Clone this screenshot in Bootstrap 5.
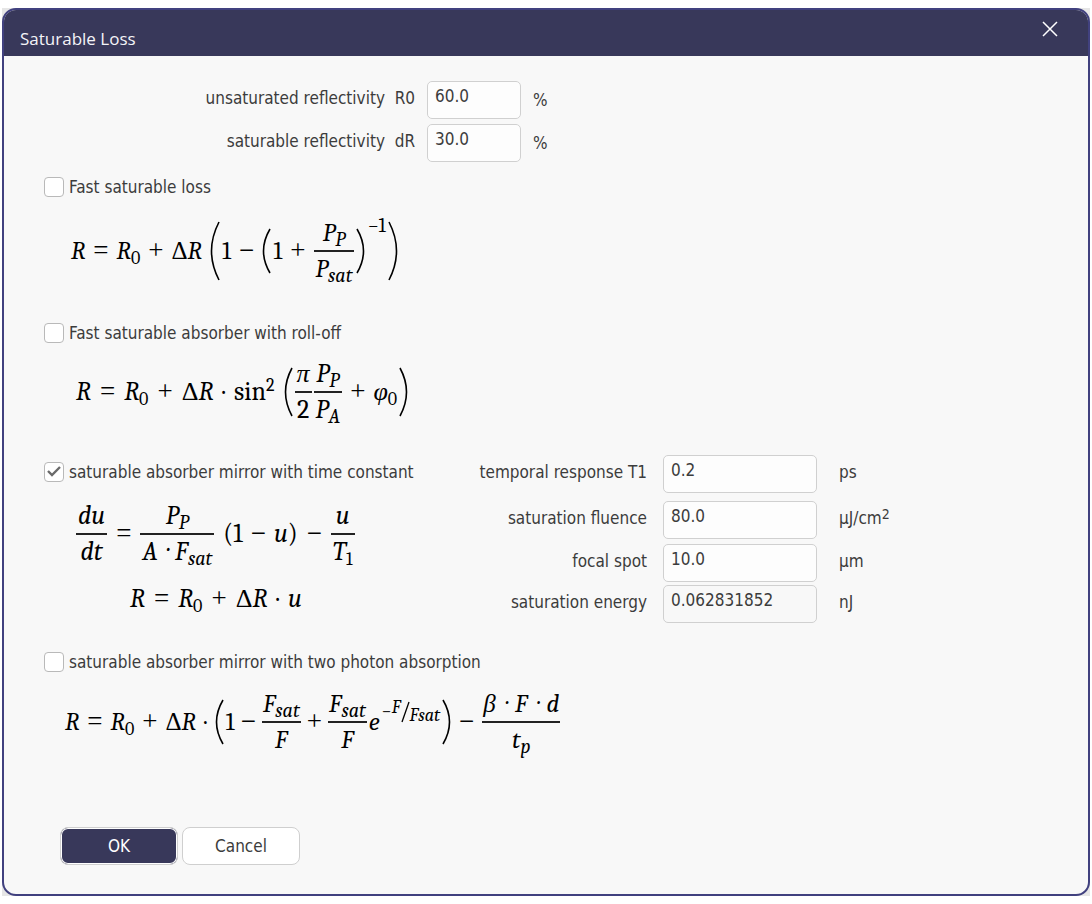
<!DOCTYPE html>
<html lang="en">
<head>
<meta charset="utf-8">
<meta name="viewport" content="width=device-width, initial-scale=1">
<title>Saturable Loss</title>
<link href="https://cdn.jsdelivr.net/npm/bootstrap@5.3.0/dist/css/bootstrap.min.css" rel="stylesheet">
<style>
  :root { --navy: #38385a; --edge: #41417f; --ink: #3c3c3c; }
  body { background: #fff; color: var(--ink); font: 17px/24px "DejaVu Sans Condensed", "DejaVu Sans", sans-serif; }

  /* window frame */
  .backdrop-area { background: #e6e6e6; margin: 8px 2px; }
  .dialog { background: #f8f8f8; border: 2px solid var(--edge); border-radius: 14px; overflow: hidden; }
  .titlebar { background: var(--navy); color: #f4f4f8; height: 46px; padding: 0 28px 0 16px; }
  .titlebar h1 { font: 17px/24px "Open Sans", "Noto Sans", sans-serif; margin: 17px 0 0; }
  .close-x { background: none; border: 0; padding: 0; margin-top: 9px; width: 20px; height: 20px; }
  .dialog-body { padding: 25px 40px 29px; }

  /* fields */
  .top-fields { display: grid; grid-template-columns: 371px 94px auto; column-gap: 12px; row-gap: 5px; align-items: center; justify-content: start; }
  .side-fields { display: grid; grid-template-columns: 190px 154px auto; grid-template-rows: 46px 43px 41px 38px; column-gap: 16px; align-items: start; }
  .top-fields label, .side-fields label { text-align: right; white-space: pre; padding-bottom: 4px; }
  .side-fields label, .side-fields .unit { padding-top: 5px; }
  .side-fields .unit { padding-left: 6px; }
  .unit sup { font-size: 14px; top: -5px; line-height: 0; }
  .form-control { height: 38px; padding: 0 7px 8px; border: 1px solid #d0d0d0; border-radius: 5px; background: #fdfdfd; color: var(--ink); font-size: 17px; line-height: 24px; }
  .form-control[readonly] { background: #f8f8f8; }
  .form-check { display: flex; align-items: center; gap: 5px; padding: 0; margin: 0; min-height: 24px; }
  .form-check .form-check-input { float: none; margin: 0; width: 20px; height: 20px; border: 1px solid #b9b9b9; border-radius: 4px; background-color: #fff; }
  .form-check .form-check-input:checked { background-size: 20px; background-image: url("data:image/svg+xml,%3Csvg xmlns='http://www.w3.org/2000/svg' viewBox='0 0 20 20'%3E%3Cpath fill='none' stroke='%236a6a6a' stroke-width='2.4' d='M4 9l4 4 8-8'/%3E%3C/svg%3E"); }

  /* formulas */
  .formula { display: flex; align-items: center; gap: 8px; min-height: 70px; color: #000; font: italic 25px/34px Cambria, Caladea, "Liberation Serif", serif; white-space: nowrap; }
  .formula .up { font-style: normal; }
  .formula .op { font: 27px/34px "Liberation Serif", serif; padding-bottom: 2px; }
  .formula sub, .formula sup { font-size: 20px; line-height: 0; }
  .formula sub { bottom: -5px; }
  .formula sub.up { font-size: 18px; }
  .formula sup { top: -9px; font-size: 18px; }
  .frac { display: flex; flex-direction: column; text-align: center; }
  .frac > span { padding: 0 2px; }
  .frac > span:first-child { border-bottom: 2px solid #222; }
  .frac .dot { padding: 0 3px; }
  .group { display: flex; align-items: center; gap: 2px; }
  .group .op { padding-left: 6px; padding-right: 6px; }
  .paren { fill: none; stroke: #000; stroke-width: 1.6; flex: none; }
  .power { align-self: flex-start; font-size: 20px; line-height: 20px; }
  .expo { display: flex; align-items: center; align-self: flex-start; font-size: 18px; line-height: 24px; height: 50px; }
  .expo .hi { margin-bottom: 8px; }
  .expo .lo { margin-top: 8px; }

  /* option blocks */
  .f-loss { margin-top: 17px; padding-left: 27px; }
  .f-roll { margin-top: 12px; padding-left: 32px; gap: 9px; font-size: 26px; }
  .f-time { margin-top: 15px; padding-left: 32px; gap: 9px; font-size: 26px; }
  .f-short { margin-top: 12px; padding-left: 86px; min-height: 34px; gap: 9px; font-size: 26px; }
  .f-photon { margin-top: 13px; padding-left: 21px; }
  .f-photon .group .op { padding-left: 4px; padding-right: 4px; }
  .f-photon .frac > span { padding: 0 1px; }
  .f-photon .frac .dot { padding: 0 4px; }
  .left-col { width: 413px; padding-top: 5px; }
  .opt-1 { margin-top: 13px; }
  .opt-2 { margin-top: 35px; }
  .opt-3 { margin-top: 28px; }
  .opt-4 { margin-top: 27px; }

  .action-row { gap: 4px; padding-left: 16px; margin-top: 70px; }
  .btn-dialog { height: 38px; width: 118px; border-radius: 8px; padding: 2px 0 0; font-size: 17px; border: 1px solid #cfcfcf; background: #fff; color: var(--ink); }
  .btn-main { background: var(--navy); color: #fff; box-shadow: inset 0 0 0 1px #fff; }
</style>
</head>
<body>
<div class="backdrop-area">
<main class="dialog">
  <header class="titlebar d-flex justify-content-between align-items-start">
    <h1>Saturable Loss</h1>
    <button type="button" class="close-x d-flex align-items-center justify-content-center" aria-label="Close"><svg width="16" height="16" viewBox="0 0 16 16" stroke="#fff" stroke-width="1.5"><path d="M1 1l14 14M15 1L1 15"/></svg></button>
  </header>

  <form class="dialog-body">
    <div class="top-fields">
      <label for="r0">unsaturated reflectivity  R0</label><input id="r0" class="form-control" value="60.0"><span>%</span>
      <label for="dr">saturable reflectivity  dR</label><input id="dr" class="form-control" value="30.0"><span>%</span>
    </div>

    <section class="opt-1">
      <div class="form-check"><input class="form-check-input" type="checkbox" id="m1"><label for="m1">Fast saturable loss</label></div>
      <div class="formula f-loss">
        <span>R</span><span class="op">=</span><span>R<sub class="up">0</sub></span><span class="op">+</span><span><span class="up">Δ</span>R</span>
        <span class="group">
          <svg class="paren" width="10" height="60" viewBox="0 0 10 60"><path d="M9 1Q-6 30 9 59"/></svg>
          <span class="up">1</span><span class="op">−</span>
          <svg class="paren" width="9" height="46" viewBox="0 0 9 46"><path d="M8 1Q-5 23 8 45"/></svg>
          <span class="up">1</span><span class="op">+</span>
          <span class="frac"><span>P<sub>P</sub></span><span>P<sub>sat</sub></span></span>
          <svg class="paren" width="9" height="46" viewBox="0 0 9 46"><path d="M1 1Q14 23 1 45"/></svg>
          <span class="power up">−1</span>
          <svg class="paren" width="10" height="60" viewBox="0 0 10 60"><path d="M1 1Q16 30 1 59"/></svg>
        </span>
      </div>
    </section>

    <section class="opt-2">
      <div class="form-check"><input class="form-check-input" type="checkbox" id="m2"><label for="m2">Fast saturable absorber with roll-off</label></div>
      <div class="formula f-roll">
        <span>R</span><span class="op">=</span><span>R<sub class="up">0</sub></span><span class="op">+</span><span><span class="up">Δ</span>R</span><span class="up">·</span><span class="up">sin<sup>2</sup></span>
        <span class="group">
          <svg class="paren" width="9" height="50" viewBox="0 0 9 50"><path d="M8 1Q-5 25 8 49"/></svg>
          <span class="frac"><span>π</span><span class="up">2</span></span>
          <span class="frac"><span>P<sub>P</sub></span><span>P<sub>A</sub></span></span>
          <span class="op">+</span><span>φ<sub class="up">0</sub></span>
          <svg class="paren" width="9" height="50" viewBox="0 0 9 50"><path d="M1 1Q14 25 1 49"/></svg>
        </span>
      </div>
    </section>

    <section class="opt-3 d-flex align-items-start">
      <div class="left-col">
        <div class="form-check"><input class="form-check-input" type="checkbox" id="m3" checked><label for="m3">saturable absorber mirror with time constant</label></div>
        <div class="formula f-time">
          <span class="frac"><span>du</span><span>dt</span></span><span class="op">=</span>
          <span class="frac"><span>P<sub>P</sub></span><span>A<span class="dot"> · </span>F<sub>sat</sub></span></span>
          <span class="group"><span class="up">(1</span><span class="op">−</span><span>u<span class="up">)</span></span></span><span class="op">−</span>
          <span class="frac"><span>u</span><span>T<sub class="up">1</sub></span></span>
        </div>
        <div class="formula f-short">
          <span>R</span><span class="op">=</span><span>R<sub class="up">0</sub></span><span class="op">+</span><span><span class="up">Δ</span>R</span><span class="up">·</span><span>u</span>
        </div>
      </div>
      <div class="side-fields">
        <label for="t1">temporal response T1</label><input id="t1" class="form-control" value="0.2"><span class="unit">ps</span>
        <label for="fl">saturation fluence</label><input id="fl" class="form-control" value="80.0"><span class="unit">µJ/cm<sup>2</sup></span>
        <label for="sp">focal spot</label><input id="sp" class="form-control" value="10.0"><span class="unit">µm</span>
        <label for="en">saturation energy</label><input id="en" class="form-control" value="0.062831852" readonly><span class="unit">nJ</span>
      </div>
    </section>

    <section class="opt-4">
      <div class="form-check"><input class="form-check-input" type="checkbox" id="m4"><label for="m4">saturable absorber mirror with two photon absorption</label></div>
      <div class="formula f-photon">
        <span>R</span><span class="op">=</span><span>R<sub class="up">0</sub></span><span class="op">+</span><span><span class="up">Δ</span>R</span><span class="up">·</span>
        <span class="group">
          <svg class="paren" width="9" height="46" viewBox="0 0 9 46"><path d="M8 1Q-5 23 8 45"/></svg>
          <span class="up">1</span><span class="op">−</span>
          <span class="frac"><span>F<sub>sat</sub></span><span>F</span></span><span class="op">+</span>
          <span class="frac"><span>F<sub>sat</sub></span><span>F</span></span><span>e</span>
          <span class="expo"><span class="up">−</span><span class="hi">F</span><svg width="9" height="22" viewBox="0 0 9 22" stroke="#000" stroke-width="1.3"><path d="M8 1L1 21"/></svg><span class="lo">Fsat</span></span>
          <svg class="paren" width="9" height="46" viewBox="0 0 9 46"><path d="M1 1Q14 23 1 45"/></svg>
        </span>
        <span class="op">−</span>
        <span class="frac"><span>β<span class="dot"> · </span>F<span class="dot"> · </span>d</span><span>t<sub>p</sub></span></span>
      </div>
    </section>

    <div class="d-flex action-row">
      <button type="submit" class="btn btn-dialog btn-main">OK</button>
      <button type="button" class="btn btn-dialog">Cancel</button>
    </div>
  </form>
</main>
</div>
<script src="https://cdn.jsdelivr.net/npm/bootstrap@5.3.0/dist/js/bootstrap.bundle.min.js"></script>
</body>
</html>
